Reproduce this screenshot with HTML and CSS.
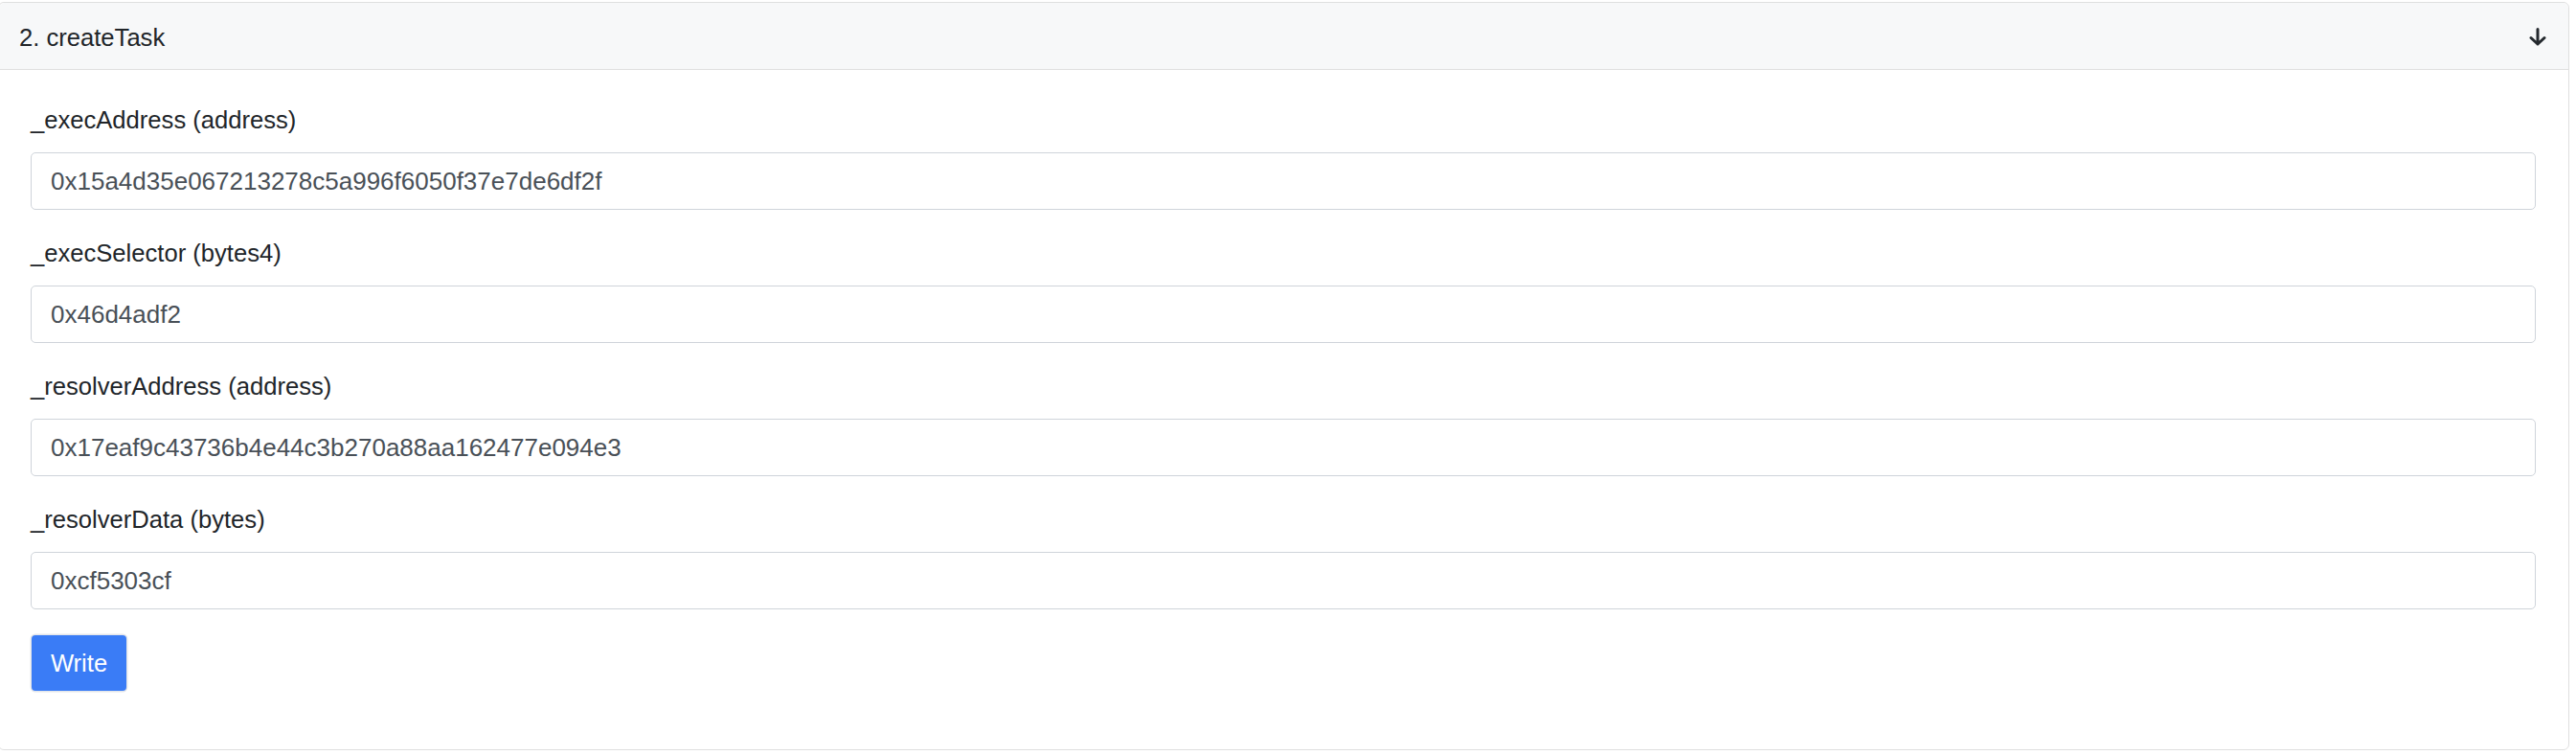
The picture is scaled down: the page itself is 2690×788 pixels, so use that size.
FILE: index.html
```html
<!DOCTYPE html>
<html>
<head>
<meta charset="utf-8">
<link rel="stylesheet" href="styles.css">
</head>
<body>
<div class="card">
  <div class="card-header">
    <span class="title">2. createTask</span>
    <svg class="arrow" width="18" height="19" viewBox="0 0 18 19"><path d="M9 1.5 V17 M2 10.5 L9 17 L16 10.5" fill="none" stroke="#24292e" stroke-width="3" stroke-linecap="round" stroke-linejoin="round"/></svg>
  </div>
  <div class="card-body">
    <div class="group">
      <label class="label">_execAddress (address)</label>
      <div class="input">0x15a4d35e067213278c5a996f6050f37e7de6df2f</div>
    </div>
    <div class="group">
      <label class="label">_execSelector (bytes4)</label>
      <div class="input">0x46d4adf2</div>
    </div>
    <div class="group">
      <label class="label">_resolverAddress (address)</label>
      <div class="input">0x17eaf9c43736b4e44c3b270a88aa162477e094e3</div>
    </div>
    <div class="group">
      <label class="label">_resolverData (bytes)</label>
      <div class="input">0xcf5303cf</div>
    </div>
    <button class="btn">Write</button>
  </div>
</div>
</body>
</html>
```
FILE: styles.css
```css
html, body {
  margin: 0;
  padding: 0;
  background: #ffffff;
  font-family: "Liberation Sans", Arial, Helvetica, sans-serif;
  font-size: 25.6px;
  line-height: 36px;
  color: #212529;
  overflow: hidden;
}
.card {
  margin: 2px 7px 0 -2px;
  border: 1px solid #dfdfdf;
  border-radius: 6px;
  background: #fff;
}
.card-header {
  display: flex;
  justify-content: space-between;
  align-items: center;
  padding: 18px 23px 15px 21px;
  background: #f7f8f9;
  border-bottom: 1px solid #dfdfdf;
  border-radius: 6px 6px 0 0;
}
.title {
  color: #212529;
}
.arrow {
  display: block;
  margin-top: -2px;
}
.card-body {
  padding: 34px 34px 61px 33px;
}
.group {
  margin-bottom: 27px;
}
.label {
  display: block;
  margin-bottom: 16px;
}
.input {
  box-sizing: border-box;
  height: 60px;
  padding: 11px 20px;
  border: 1px solid #cfd4da;
  border-radius: 5px;
  color: #495057;
  font-size: 26px;
}
.btn {
  display: block;
  box-sizing: border-box;
  margin: 5px 0 0 1px;
  height: 58px;
  width: 99px;
  padding: 0;
  border: none;
  border-radius: 4px;
  background: #3a7cf6;
  color: #ffffff;
  font-family: "Liberation Sans", Arial, Helvetica, sans-serif;
  font-size: 25.6px;
  box-shadow: 0 0 0 1.5px #e3e6ea;
}
```
